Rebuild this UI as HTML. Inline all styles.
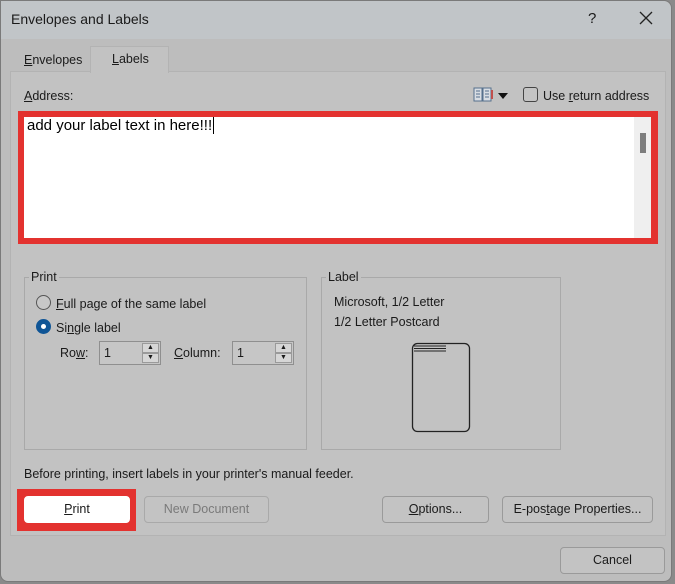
<!DOCTYPE html>
<html><head><style>
*{box-sizing:border-box;margin:0;padding:0}
body{width:675px;height:584px;background:#8a8a8a;font-family:"Liberation Sans",sans-serif;font-size:12.5px;color:#1a1a1a;position:relative;overflow:hidden}
.win{position:absolute;left:0;top:0;width:672px;height:582px;background:#bdbdbd;border:1px solid #7a7a7a;border-radius:0 8px 8px 8px}
.a{position:absolute}
.title{left:0;top:0;width:670px;height:38px;background:#c1c5c8;border-radius:0 8px 0 0}
u{text-decoration:underline}
.btn{position:absolute;height:27px;border:1px solid #9a9a9a;border-radius:4px;background:#c3c3c3;text-align:center;line-height:25px}
.grp{position:absolute;border:1px solid #a9a9a9}
.grp .lg{position:absolute;top:-8px;left:4px;background:#c2c2c2;padding:0 2px}
.spin{position:absolute;width:62px;height:24px;border:1px solid #8f8f8f;background:#c6c6c6;padding-left:4px;line-height:22px}
.spin .ar{position:absolute;right:1px;width:17px;height:10px;background:#d6d6d6;border:1px solid #9a9a9a;font-size:7px;line-height:8px;text-align:center}
</style></head><body>
<div class="win">
<div class="a title"></div>
<div class="a" style="left:10px;top:10px;font-size:14px">Envelopes and Labels</div>
<div class="a" style="left:587px;top:9px;font-size:15px">?</div>
<svg class="a" style="left:638px;top:10px" width="14" height="14"><path d="M1 1L13 13M13 1L1 13" stroke="#222" stroke-width="1.3"/></svg>
<!-- tabs -->
<div class="a" style="left:9px;top:70px;width:656px;height:465px;background:#c2c2c2;border:1px solid #b3b3b3"></div>
<div class="a" style="left:89px;top:45px;width:79px;height:27px;background:#c2c2c2;border:1px solid #b3b3b3;border-bottom:none"></div>
<div class="a" style="left:23px;top:52px"><u>E</u>nvelopes</div>
<div class="a" style="left:111px;top:51px"><u>L</u>abels</div>
<div class="a" style="left:23px;top:88px"><u>A</u>ddress:</div>
<svg class="a" style="left:472px;top:86px" width="20" height="16"><rect x="1" y="1" width="8" height="13" fill="#d8dde3" stroke="#56708c"/><rect x="10" y="1" width="8" height="13" fill="#d8dde3" stroke="#56708c"/><path d="M3 4h4M3 7h4M3 10h4M12 4h4M12 7h4M12 10h4" stroke="#56708c"/><rect x="18" y="3" width="2" height="9" fill="#c0504d"/></svg>
<div class="a" style="left:497px;top:92px;width:0;height:0;border-left:5px solid transparent;border-right:5px solid transparent;border-top:6px solid #111"></div>
<div class="a" style="left:522px;top:86px;width:15px;height:15px;border:1px solid #444;border-radius:3px;background:#c4c4c4"></div>
<div class="a" style="left:542px;top:88px">Use <u>r</u>eturn address</div>
<!-- address -->
<div class="a" style="left:17px;top:110px;width:640px;height:133px;background:#e3322f"></div>
<div class="a" style="left:23px;top:116px;width:610px;height:121px;background:#fff"></div>
<div class="a" style="left:633px;top:116px;width:17px;height:121px;background:#efefef"></div>
<div class="a" style="left:639px;top:132px;width:6px;height:20px;background:#7d7d7d"></div>
<div class="a" style="left:26px;top:116px;font-size:15px;color:#000">add your label text in here!!!<span style="border-left:1px solid #000;margin-left:1px"></span></div>
<!-- print group -->
<div class="grp" style="left:23px;top:276px;width:283px;height:173px"><span class="lg">Print</span></div>
<div class="a" style="left:35px;top:294px;width:15px;height:15px;border:1px solid #555;border-radius:50%;background:#c8c8c8"></div>
<div class="a" style="left:55px;top:296px"><u>F</u>ull page of the same label</div>
<div class="a" style="left:35px;top:318px;width:15px;height:15px;border-radius:50%;background:#0f5596"></div>
<div class="a" style="left:40px;top:323px;width:5px;height:5px;border-radius:50%;background:#fff"></div>
<div class="a" style="left:55px;top:320px">Si<u>n</u>gle label</div>
<div class="a" style="left:59px;top:345px">Ro<u>w</u>:</div>
<div class="spin" style="left:98px;top:340px">1<div class="ar" style="top:1px">▲</div><div class="ar" style="top:11px">▼</div></div>
<div class="a" style="left:173px;top:345px"><u>C</u>olumn:</div>
<div class="spin" style="left:231px;top:340px">1<div class="ar" style="top:1px">▲</div><div class="ar" style="top:11px">▼</div></div>
<!-- label group -->
<div class="grp" style="left:320px;top:276px;width:240px;height:173px"><span class="lg">Label</span></div>
<div class="a" style="left:333px;top:294px">Microsoft, 1/2 Letter</div>
<div class="a" style="left:333px;top:314px">1/2 Letter Postcard</div>
<svg class="a" style="left:410px;top:341px" width="60" height="92"><rect x="1.5" y="1.5" width="57" height="88" rx="5" fill="none" stroke="#222" stroke-width="1.3"/><path d="M3 4h32M3 6.5h32M3 9h32" stroke="#222"/></svg>
<div class="a" style="left:23px;top:466px">Before printing, insert labels in your printer's manual feeder.</div>
<!-- buttons -->
<div class="a" style="left:16px;top:488px;width:119px;height:42px;background:#e3322f"></div>
<div class="btn" style="left:23px;top:495px;width:106px;background:#fff;border-color:#fff"><u>P</u>rint</div>
<div class="btn" style="left:143px;top:495px;width:125px;color:#7a7a7a;border-color:#a9a9a9">New Document</div>
<div class="btn" style="left:381px;top:495px;width:107px"><u>O</u>ptions...</div>
<div class="btn" style="left:501px;top:495px;width:151px">E-pos<u>t</u>age Properties...</div>
<div class="btn" style="left:559px;top:546px;width:105px">Cancel</div>
</div>
</body></html>
